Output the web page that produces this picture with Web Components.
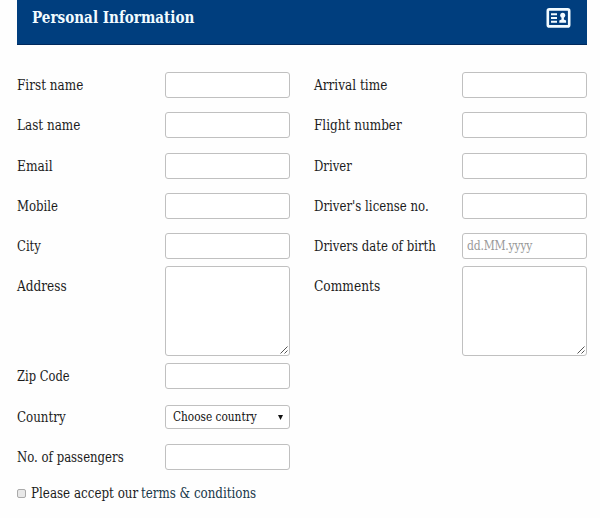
<!DOCTYPE html>
<html lang="en">
<head>
  <meta charset="UTF-8">
  <title>Personal Information</title>
  <style>
    body {
      margin: 0;
      background-color: #fefefe;
      color: #1c1c1c;
      font-family: 'Roboto Slab', 'DejaVu Serif Condensed', 'DejaVu Serif', serif;
      font-size: 14px;
    }
  </style>
</head>
<body>
  <personal-form></personal-form>

  <script>
    // One line of text, set to a fixed measure
    class TextLine extends HTMLElement {
      constructor() {
        super();
        this.attachShadow({ mode: 'open' });
      }

      connectedCallback() {
        this.shadowRoot.innerHTML = `
          <style>
            :host {
              display: block;
              width: ${this.getAttribute('measure')}px;
              white-space: nowrap;
            }

            span {
              display: inline-block;
              transform-origin: 0 50%;
            }
          </style>
          <span><slot></slot></span>
        `;
        const span = this.shadowRoot.querySelector('span');
        const scale = this.getAttribute('measure') / span.offsetWidth;
        span.style.transform = `scaleX(${scale})`;
      }
    }

    class PanelHeader extends HTMLElement {
      constructor() {
        super();
        this.attachShadow({ mode: 'open' });
      }

      connectedCallback() {
        this.shadowRoot.innerHTML = `
          <style>
            :host {
              display: flex;
              justify-content: space-between;
              align-items: flex-start;
              box-sizing: border-box;
              height: 45px;
              padding: 7px 16px 0 15px;
              background-color: #003e7e;
              border-bottom: 1px solid #00295c;
              color: #f2fbff;
              font-size: 16px;
              font-weight: bold;
              line-height: 21px;
            }

            svg {
              display: block;
              margin-top: 1px;
            }
          </style>
          <slot></slot>
          <svg width="25" height="20" viewBox="0 0 25 20">
            <rect x="1.8" y="1.4" width="21.4" height="17" rx="1.5" fill="none" stroke="#f2fbff" stroke-width="2.6"/>
            <path d="M5 6.2h6M5 10h6M5 13.8h6" stroke="#f2fbff" stroke-width="2"/>
            <circle cx="16.7" cy="7.3" r="2.5" fill="#f2fbff"/>
            <path d="M15.5 9h2.4v2.4l2.2 1v2.4h-6.8v-2.4l2.2-1z" fill="#f2fbff"/>
          </svg>
        `;
      }
    }

    class FormField extends HTMLElement {
      constructor() {
        super();
        this.attachShadow({ mode: 'open' });
      }

      connectedCallback() {
        this.shadowRoot.innerHTML = `
          <style>
            :host {
              display: grid;
              grid-template-columns: 148px 125px;
              align-items: start;
              line-height: 27px;
            }

            :host([type="textarea"]) text-line {
              margin-top: 7px;
            }

            :host([type="select"]) {
              line-height: 25px;
            }

            input, textarea, .select {
              display: block;
              box-sizing: border-box;
              width: 125px;
              height: 26px;
              margin: 0;
              padding: 1px 4px 0;
              border: 1px solid #c0c0c0;
              border-radius: 3px;
              background-color: #fff;
              font: inherit;
              font-size: 12px;
            }

            input::placeholder {
              color: #999;
              letter-spacing: -0.2px;
            }

            textarea {
              height: 90px;
              resize: none;
            }

            .area {
              display: grid;
            }

            .area > * {
              grid-area: 1 / 1;
            }

            .grip {
              place-self: end;
              margin: 0 2px 2px 0;
            }

            .select {
              display: flex;
              justify-content: space-between;
              align-items: center;
              height: 24px;
              padding: 0 6px 0 7px;
              color: #111;
            }
          </style>
          <text-line measure="${this.getAttribute('measure')}">${this.getAttribute('label')}</text-line>
          ${this.control}
        `;
      }

      get control() {
        switch (this.getAttribute('type')) {
          case 'textarea':
            return `
              <div class="area">
                <textarea></textarea>
                <svg class="grip" width="8" height="8" viewBox="0 0 8 8">
                  <path d="M0.5 7.5l7-7M4.5 7.5l3-3" stroke="#555" fill="none"/>
                </svg>
              </div>`;
          case 'select':
            return `
              <div class="select">
                <text-line measure="84">Choose country</text-line>
                <svg width="5" height="5" viewBox="0 0 5 5"><path d="M0 0h5L2.5 5z" fill="#111"/></svg>
              </div>`;
          default:
            return `<input type="text" placeholder="${this.getAttribute('placeholder') || ''}">`;
        }
      }
    }

    class TermsCheck extends HTMLElement {
      constructor() {
        super();
        this.attachShadow({ mode: 'open' });
      }

      connectedCallback() {
        this.shadowRoot.innerHTML = `
          <style>
            :host {
              display: flex;
              align-items: center;
              height: 20px;
              line-height: 20px;
            }

            input {
              appearance: none;
              box-sizing: border-box;
              width: 9px;
              height: 9px;
              margin: 0 5px 0 0;
              border: 1px solid #aaa;
              border-radius: 2px;
              background-color: #e8e8e8;
            }

            a {
              margin-left: 3px;
              color: #17384a;
            }
          </style>
          <input type="checkbox">
          <text-line measure="107">Please accept our</text-line>
          <a><text-line measure="115">terms &amp; conditions</text-line></a>
        `;
      }
    }

    class PersonalForm extends HTMLElement {
      constructor() {
        super();
        this.attachShadow({ mode: 'open' });
      }

      connectedCallback() {
        this.shadowRoot.innerHTML = `
          <style>
            :host {
              display: block;
              width: 570px;
              margin-left: 17px;
            }

            .columns {
              display: grid;
              grid-template-columns: 273px 273px;
              column-gap: 24px;
              margin-top: 27px;
            }

            .column {
              display: grid;
              grid-template-rows: 40px 41px 40px 40px 33px 97px 42px 39px 26px;
            }

            terms-check {
              margin-top: 13px;
            }
          </style>
          <panel-header><text-line measure="162">Personal Information</text-line></panel-header>
          <div class="columns">
            <div class="column">
              <form-field label="First name" measure="66"></form-field>
              <form-field label="Last name" measure="63"></form-field>
              <form-field label="Email" measure="36"></form-field>
              <form-field label="Mobile" measure="41"></form-field>
              <form-field label="City" measure="24"></form-field>
              <form-field label="Address" measure="50" type="textarea"></form-field>
              <form-field label="Zip Code" measure="53"></form-field>
              <form-field label="Country" measure="49" type="select"></form-field>
              <form-field label="No. of passengers" measure="107"></form-field>
            </div>
            <div class="column">
              <form-field label="Arrival time" measure="73"></form-field>
              <form-field label="Flight number" measure="88"></form-field>
              <form-field label="Driver" measure="38"></form-field>
              <form-field label="Driver's license no." measure="115"></form-field>
              <form-field label="Drivers date of birth" measure="122" placeholder="dd.MM.yyyy"></form-field>
              <form-field label="Comments" measure="66" type="textarea"></form-field>
            </div>
          </div>
          <terms-check></terms-check>
        `;
      }
    }

    customElements.define('text-line', TextLine);
    customElements.define('panel-header', PanelHeader);
    customElements.define('form-field', FormField);
    customElements.define('terms-check', TermsCheck);
    customElements.define('personal-form', PersonalForm);
  </script>
</body>
</html>
